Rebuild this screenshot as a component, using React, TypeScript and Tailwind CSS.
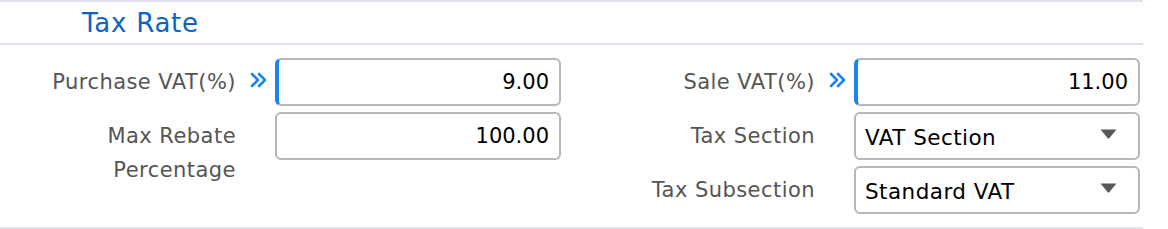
import React from 'react'

const font = { fontFamily: '"DejaVu Sans", Verdana, sans-serif' }

const Chevrons = () => (
    <svg width="18" height="16" viewBox="0 0 18 16" fill="none" stroke="#1a84f0" strokeWidth="2.6" strokeLinecap="round" strokeLinejoin="round">
        <path d="M3 2 L9 8 L3 14" />
        <path d="M10 2 L16 8 L10 14" />
    </svg>
)

const Caret = () => (
    <svg width="17" height="10" viewBox="0 0 17 10">
        <path d="M0.5 0.5 H16.5 L9.2 9.3 Q8.5 10 7.8 9.3 Z" fill="#585858" />
    </svg>
)

type FieldProps = {
    label: string
    lines?: string[]
    value?: string
    select?: string
    active?: boolean
}

const Field = ({ label, lines, value, select, active }: FieldProps) => (
    <div className='flex items-start h-[48px]'>
        <div className='w-[236px] shrink-0 text-right text-[21px] tracking-[0.45px] text-[#555555] leading-[34px] pt-[7px]'>
            {lines ? lines.map(l => <div key={l}>{l}</div>) : label}
        </div>
        <div className='w-[39px] shrink-0 h-[48px] flex items-center pl-[13px] pb-[5px]'>
            {active && <Chevrons />}
        </div>
        {select !== undefined ? (
            <div className='w-[286px] h-[48px] shrink-0 border-2 border-[#b7b7b7] rounded-[6px] bg-white flex items-center justify-between pl-[9px] pr-[21px]'>
                <span className='text-[21.5px] tracking-[0.45px] text-black leading-none pt-[3px]'>{select}</span>
                <span className='pb-[5px]'><Caret /></span>
            </div>
        ) : (
            <div className={'w-[286px] h-[48px] shrink-0 border-2 border-[#b7b7b7] rounded-[6px] bg-white flex items-center justify-end pr-[10px] ' + (active ? 'border-l-4 border-l-[#1a84f0]' : '')}>
                <span className='text-[21px] text-black leading-none'>{value}</span>
            </div>
        )}
    </div>
)

export default function App() {
    return (
        <div className='w-[1168px] h-[229px] bg-white' style={font}>
            <div className='w-[1143px] border-t-2 border-b-2 border-[#e3e1f1] h-[45px] flex items-center pl-[82px]'>
                <span className='text-[26px] tracking-[0.75px] text-[#0b63c8] leading-none pt-[1px]'>Tax Rate</span>
            </div>
            <div className='w-[1143px] h-[184px] border-b-2 border-[#e3e1f1] pt-[13px] flex'>
                <div className='w-[579px] flex flex-col gap-[6px]'>
                    <Field label='Purchase VAT(%)' value='9.00' active />
                    <Field label='' lines={['Max Rebate', 'Percentage']} value='100.00' />
                </div>
                <div className='w-[564px] flex flex-col gap-[6px]'>
                    <Field label='Sale VAT(%)' value='11.00' active />
                    <Field label='Tax Section' select='VAT Section' />
                    <Field label='Tax Subsection' select='Standard VAT' />
                </div>
            </div>
        </div>
    )
}
